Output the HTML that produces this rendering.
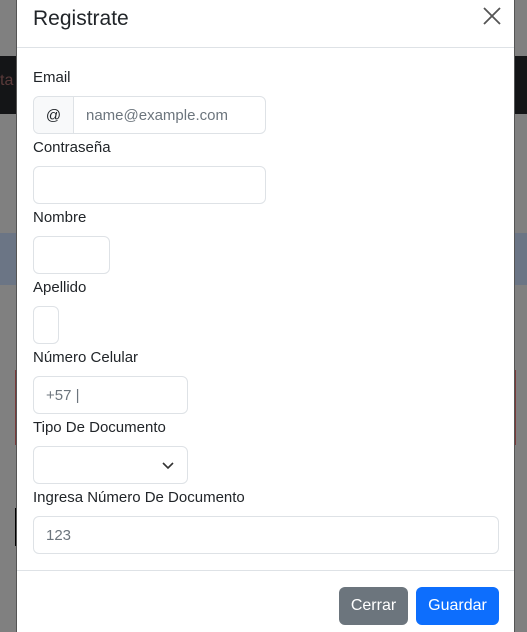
<!DOCTYPE html>
<html style="overflow:hidden;height:632px"><head><style>
*{box-sizing:border-box;margin:0;padding:0}
body{width:527px;height:632px;overflow:hidden;background:#808080;position:relative;font-family:"Liberation Sans",sans-serif;color:#212529}
.band{position:absolute;left:0;right:0}
.modal{position:absolute;left:16px;width:499px;top:-10px;height:642px;background:#fff;border-left:1px solid #555;border-right:1px solid #555}
.abs{position:absolute}
.lbl{position:absolute;left:16px;font-size:15px;color:#212529}
.inp{position:absolute;left:16px;height:38px;border:1px solid #dee2e6;border-radius:6px;background:#fff;font-size:15px;color:#6c757d;padding-left:12px;line-height:38px}
.btn{position:absolute;top:597px;height:38px;border-radius:6px;color:#fff;font-size:16px;line-height:38px;text-align:center}
</style></head><body>
<div class="band" style="top:56px;height:58px;background:#141517"></div>
<div class="abs" style="left:0;top:72px;font-size:16px;color:#5a3a3a">ta</div>
<div class="band" style="top:233px;height:52px;background:#6b7585"></div>
<div class="abs" style="left:15px;top:370px;width:2px;height:75px;background:#7a3a3a"></div>
<div class="abs" style="left:15px;top:508px;width:2px;height:38px;background:#000"></div>
<div class="abs" style="right:11px;top:370px;width:2px;height:75px;background:#7a3a3a"></div>
<div class="modal">
 <div class="abs" style="left:16px;top:17px;font-size:21px;font-weight:500;color:#212529">Registrate</div>
 <svg class="abs" style="left:466px;top:17px" width="18" height="18" viewBox="0 0 18 18"><path d="M1 1L17 17M17 1L1 17" stroke="#555" stroke-width="1.8"/></svg>
 <div class="abs" style="left:0;right:0;top:57px;height:1px;background:#dee2e6"></div>
 <div class="lbl" style="top:79px">Email</div>
 <div class="inp" style="top:106px;width:233px;padding:0">
   <div class="abs" style="left:0;top:0;width:40px;height:36px;background:#f8f9fa;border-right:1px solid #dee2e6;border-radius:6px 0 0 6px;text-align:center;color:#212529;line-height:38px">@</div>
   <div class="abs" style="left:52px;top:0;color:#6c757d">name@example.com</div>
 </div>
 <div class="lbl" style="top:149px">Contraseña</div>
 <div class="inp" style="top:176px;width:233px"></div>
 <div class="lbl" style="top:219px">Nombre</div>
 <div class="inp" style="top:246px;width:77px"></div>
 <div class="lbl" style="top:289px">Apellido</div>
 <div class="inp" style="top:316px;width:26px"></div>
 <div class="lbl" style="top:359px">Número Celular</div>
 <div class="inp" style="top:386px;width:155px">+57 |</div>
 <div class="lbl" style="top:429px">Tipo De Documento</div>
 <div class="inp" style="top:456px;width:155px"><svg class="abs" style="left:127px;top:14px" width="14" height="9" viewBox="0 0 14 9"><path d="M2 2L7 7L12 2" stroke="#333" stroke-width="1.6" fill="none"/></svg></div>
 <div class="lbl" style="top:499px">Ingresa Número De Documento</div>
 <div class="inp" style="top:526px;width:466px">123</div>
 <div class="abs" style="left:0;right:0;top:580px;height:1px;background:#dee2e6"></div>
 <div class="btn" style="left:322px;width:69px;background:#6c757d">Cerrar</div>
 <div class="btn" style="left:399px;width:83px;background:#0d6efd">Guardar</div>
</div>
</body></html>
